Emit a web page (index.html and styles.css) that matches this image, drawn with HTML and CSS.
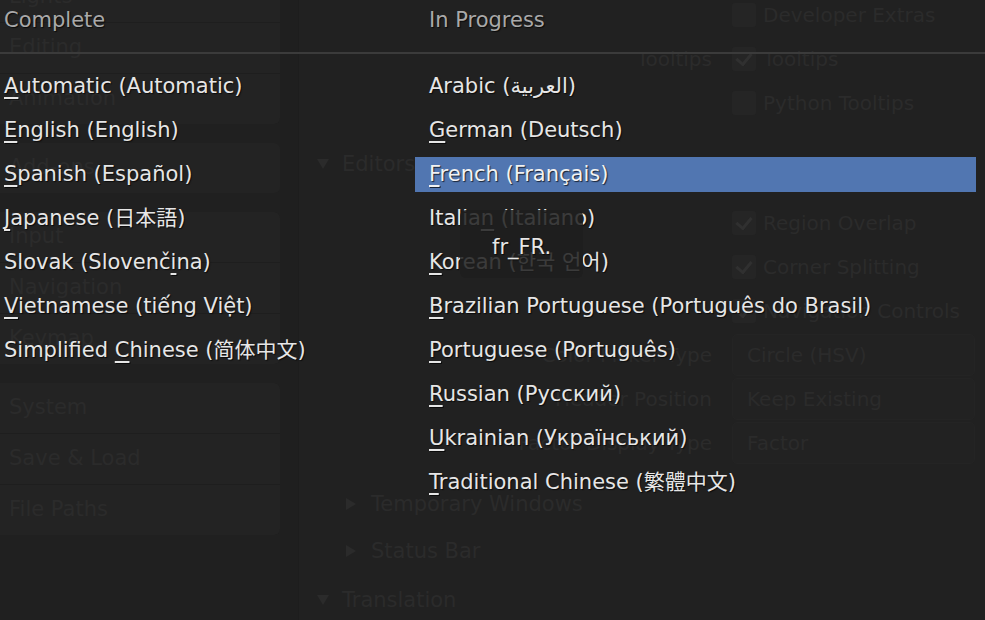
FILE: index.html
```html
<!DOCTYPE html>
<html lang="en">
<head>
    <meta charset="UTF-8">
    <meta name="viewport" content="width=device-width, initial-scale=1.0">
    <title>Preferences - Language</title>
    <link rel="stylesheet" href="styles.css">
</head>
<body>

    <!-- Preferences window behind the open menu -->
    <div class="prefs">
        <nav class="sidebar">
            <div class="tab-group first">
                <div class="tab">Lights</div>
                <div class="tab">Editing</div>
                <div class="tab">Animation</div>
            </div>
            <div class="tab-group">
                <div class="tab">Add-ons</div>
            </div>
            <div class="tab-group">
                <div class="tab">Input</div>
                <div class="tab">Navigation</div>
                <div class="tab">Keymap</div>
            </div>
            <div class="tab-group">
                <div class="tab">System</div>
                <div class="tab">Save &amp; Load</div>
                <div class="tab">File Paths</div>
            </div>
        </nav>

        <div class="divider"></div>

        <main class="main">
            <div class="row">
                <span class="label"></span>
                <span class="check-wrap"><span class="check"></span>Developer Extras</span>
            </div>
            <div class="row">
                <span class="label">Tooltips</span>
                <span class="check-wrap"><span class="check on"></span>Tooltips</span>
            </div>
            <div class="row">
                <span class="label"></span>
                <span class="check-wrap"><span class="check"></span>Python Tooltips</span>
            </div>

            <div class="panel-head editors"><span class="arrow down"></span>Editors</div>

            <div class="row">
                <span class="label"></span>
                <span class="check-wrap"><span class="check on"></span>Region Overlap</span>
            </div>
            <div class="row">
                <span class="label"></span>
                <span class="check-wrap"><span class="check on"></span>Corner Splitting</span>
            </div>
            <div class="row">
                <span class="label"></span>
                <span class="check-wrap"><span class="check on"></span>Navigation Controls</span>
            </div>
            <div class="row">
                <span class="label">Color Picker Type</span>
                <span class="field">Circle (HSV)</span>
            </div>
            <div class="row">
                <span class="label">Header Position</span>
                <span class="field">Keep Existing</span>
            </div>
            <div class="row">
                <span class="label">Factor Display Type</span>
                <span class="field">Factor</span>
            </div>

            <div class="panel-head sub temp"><span class="arrow right"></span>Temporary Windows</div>
            <div class="panel-head sub status"><span class="arrow right"></span>Status Bar</div>
            <div class="panel-head translation"><span class="arrow down"></span>Translation</div>
        </main>
    </div>

    <!-- Language menu -->
    <div class="menu">
        <div class="menu-head">
            <div class="col-left">Complete</div>
            <div class="col-right">In Progress</div>
        </div>
        <div class="menu-sep"></div>
        <div class="menu-body">
            <ul class="col-left">
                <li><u>A</u>utomatic (Automatic)</li>
                <li><u>E</u>nglish (English)</li>
                <li><u>S</u>panish (Español)</li>
                <li><u>J</u>apanese (日本語)</li>
                <li>Slovak (Slovenč<u>i</u>na)</li>
                <li><u>V</u>ietnamese (tiếng Việt)</li>
                <li>Simplified <u>C</u>hinese (简体中文)</li>
            </ul>
            <ul class="col-right">
                <li>Arabic (العربية)</li>
                <li><u>G</u>erman (Deutsch)</li>
                <li class="active"><u>F</u>rench (Français)</li>
                <li>Italia<u>n</u> (Italiano)</li>
                <li><u>K</u>orean (한국 언어)</li>
                <li><u>B</u>razilian Portuguese (Português do Brasil)</li>
                <li><u>P</u>ortuguese (Português)</li>
                <li><u>R</u>ussian (Русский)</li>
                <li><u>U</u>krainian (Український)</li>
                <li><u>T</u>raditional Chinese (繁體中文)</li>
            </ul>
        </div>

        <div class="tooltip">fr_FR.</div>
    </div>

</body>
</html>
```

FILE: styles.css
```css
html, body {
    margin: 0;
    padding: 0;
}

body {
    width: 985px;
    height: 620px;
    overflow: hidden;
    position: relative;
    background-color: #212121;
    font-family: "DejaVu Sans", "Noto Sans CJK JP", sans-serif;
}

/* ---------- background preferences (dimmed) ---------- */

.prefs {
    display: flex;
    height: 620px;
    color: #2b2b2b;
    font-size: 20px;
}

.sidebar {
    width: 280px;
    flex-shrink: 0;
    background-color: #202020;
    display: flex;
    flex-direction: column;
    gap: 19px;
}

.tab-group {
    display: flex;
    flex-direction: column;
    flex-shrink: 0;
    gap: 1px;
    background-color: #1e1e1e;
    border-radius: 0 6px 6px 0;
    overflow: hidden;
}

.tab-group.first {
    margin-top: -28px;
}

.tab {
    height: 50px;
    line-height: 48px;
    padding-left: 9px;
    background-color: #232323;
    font-size: 21px;
}

.divider {
    width: 18px;
    flex-shrink: 0;
    background-color: #1f1f1f;
    border-right: 1px solid #1d1d1d;
}

.main {
    flex: 1;
    display: flex;
    flex-direction: column;
    margin-top: -7px;
}

.row {
    display: grid;
    grid-template-columns: 413px 1fr;
    column-gap: 20px;
    height: 44px;
    flex-shrink: 0;
    align-items: center;
}

.label {
    text-align: right;
}

.check-wrap {
    display: flex;
    align-items: center;
    gap: 7px;
}

.check {
    width: 24px;
    height: 24px;
    border-radius: 3px;
    background-color: #252525;
    position: relative;
}

.check.on::after {
    content: "";
    position: absolute;
    left: 7px;
    top: 3px;
    width: 7px;
    height: 12px;
    border-right: 3px solid #303030;
    border-bottom: 3px solid #303030;
    transform: rotate(40deg);
}

.field {
    height: 40px;
    line-height: 40px;
    padding-left: 14px;
    margin-right: 10px;
    background-color: #222222;
    border: 1px solid #242424;
    border-radius: 5px;
}

.panel-head {
    height: 44px;
    flex-shrink: 0;
    display: flex;
    align-items: center;
    padding-left: 18px;
    font-size: 21px;
}

.panel-head.editors {
    margin-top: 17px;
    margin-bottom: 15px;
}

.panel-head.sub {
    padding-left: 47px;
}

.panel-head.temp {
    margin-top: 17px;
}

.panel-head.status {
    margin-top: 3px;
}

.panel-head.translation {
    margin-top: 5px;
}

.arrow {
    width: 0;
    height: 0;
    margin-right: 15px;
}

.arrow.down {
    border-left: 6px solid transparent;
    border-right: 6px solid transparent;
    border-top: 10px solid #2b2b2b;
    margin-right: 13px;
}

.arrow.right {
    border-top: 6px solid transparent;
    border-bottom: 6px solid transparent;
    border-left: 10px solid #2b2b2b;
}

/* ---------- language menu ---------- */

.menu {
    position: absolute;
    left: 0;
    top: 0;
    right: 0;
    bottom: 0;
    font-size: 21px;
    color: #e6e6e6;
    text-shadow: 1px 1px 1px rgba(0, 0, 0, 0.7);
}

.menu-head {
    display: flex;
    height: 38px;
    padding-top: 1px;
    line-height: 38px;
    color: #a9a9a9;
}

.col-left {
    width: 415px;
    flex-shrink: 0;
    padding-left: 4px;
    box-sizing: border-box;
}

.col-right {
    flex: 1;
}

.menu-head .col-right {
    padding-left: 14px;
}

.menu-sep {
    height: 2px;
    margin-top: 13px;
    background-color: #3b3b3b;
}

.menu-body {
    display: flex;
    margin-top: 15px;
}

.menu-body ul {
    list-style: none;
    margin: 0;
    padding-top: 0;
    padding-bottom: 0;
    display: flex;
    flex-direction: column;
    gap: 9px;
}

.menu-body ul.col-right {
    padding-left: 0;
    margin-right: 9px;
}

.menu-body li {
    height: 35px;
    line-height: 35px;
    white-space: nowrap;
}

.menu-body .col-right li {
    padding-left: 14px;
}

.menu-body li.active {
    background-color: #5176b1;
    color: #f2f2f2;
}

u {
    text-decoration-thickness: 2px;
    text-underline-offset: 4px;
}

.tooltip {
    position: absolute;
    left: 460px;
    top: 210px;
    width: 123px;
    height: 68px;
    box-sizing: border-box;
    padding: 20px 0 0 32px;
    line-height: 34px;
    background-color: rgba(30, 30, 30, 0.86);
    border-radius: 6px;
    color: #e6e6e6;
}
```
